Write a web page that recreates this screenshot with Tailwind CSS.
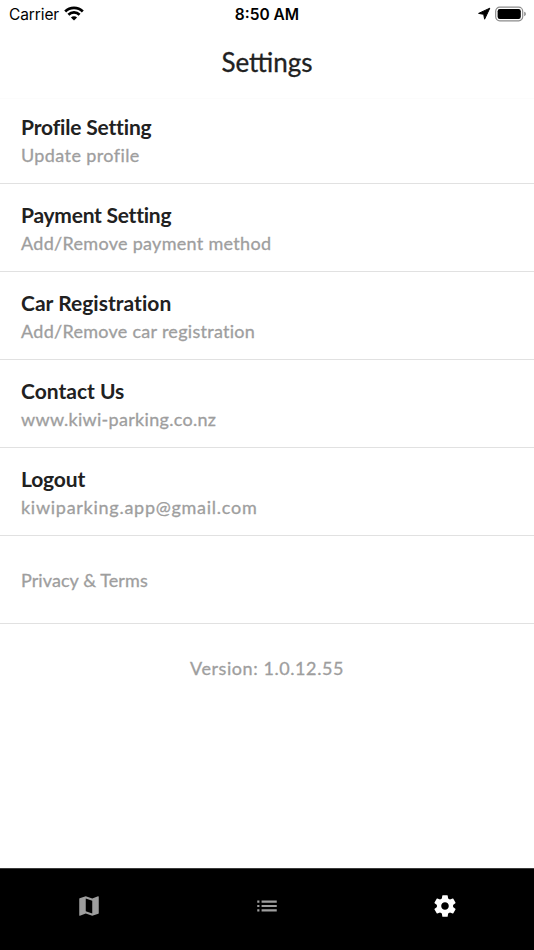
<!DOCTYPE html>
<html lang="en">
<head>
  <meta charset="UTF-8" />
  <meta name="viewport" content="width=device-width, initial-scale=1.0"/>
  <title>Settings - Kiwi Parking</title>
  <script src="https://cdn.jsdelivr.net/npm/@tailwindcss/browser@4"></script>
</head>
<body class="bg-white">
  <div class="flex flex-col h-[950px] w-[534px] overflow-hidden font-[Lato,sans-serif] text-[#212121]">

    <!-- status bar -->
    <div class="grid grid-cols-3 items-center h-7 shrink-0 pl-[9px] pr-[7px] font-[Inter,sans-serif] text-black">
      <div class="flex items-center gap-[5px] text-[15.5px]">
        <span class="tracking-[-0.1px] pt-px">Carrier</span>
        <svg class="w-5 h-[15px] mb-0.5" viewBox="0 0 20 15" fill="none" stroke="#000" stroke-width="2.7">
          <path d="M1.2 5.5a12.4 12.4 0 0 1 17.6 0"/>
          <path d="M4.4 8.8a7.9 7.9 0 0 1 11.2 0"/>
          <path d="M10 14.6l-3.1-3.1a4.4 4.4 0 0 1 6.2 0z" fill="#000" stroke="none"/>
        </svg>
      </div>
      <span class="text-center text-[15.5px] font-semibold pt-px pr-0.5">8:50 AM</span>
      <div class="flex items-center justify-end gap-1">
        <svg class="w-[14px] h-[14px]" viewBox="0 0 14 14"><path d="M12.8 1.2L7.6 12.2 6.7 7.3 1.6 6.4z" stroke="#000" stroke-linejoin="round"/></svg>
        <svg class="w-8 h-4 mb-px" viewBox="0 0 32 16">
          <rect x=".7" y="1.2" width="27" height="13.6" rx="4" fill="none" stroke="#8c8c8c" stroke-width="1.2"/>
          <rect x="2.6" y="3" width="23.2" height="10" rx="2.2"/>
          <path d="M29.2 5.8c2.2.6 2.2 3.8 0 4.4z" fill="#8c8c8c"/>
        </svg>
      </div>
    </div>

    <header class="flex items-center justify-center h-[70px] shrink-0 pb-0.5 text-[26px]">
      <h1 class="[-webkit-text-stroke:0.3px]">Settings</h1>
    </header>

    <!-- settings list -->
    <main class="flex-1">
      <ul class="border-t border-[#fcfcfc]">
        <li class="h-[85px] border-b border-[#e1e1e1] px-[21px] pt-3.5">
          <h2 class="text-[21px] leading-7 font-bold tracking-[-0.17px]">Profile Setting</h2>
          <p class="text-[18px] leading-7 text-[#9e9e9e] tracking-[0.4px] [-webkit-text-stroke:0.3px]">Update profile</p>
        </li>
        <li class="h-[88px] border-b border-[#e1e1e1] px-[21px] pt-[17px]">
          <h2 class="text-[21px] leading-7 font-bold tracking-[-0.25px]">Payment Setting</h2>
          <p class="text-[18px] leading-7 text-[#9e9e9e] tracking-[0.3px] [-webkit-text-stroke:0.3px]">Add/Remove payment method</p>
        </li>
        <li class="h-[88px] border-b border-[#e1e1e1] px-[21px] pt-[17px]">
          <h2 class="text-[21px] leading-7 font-bold tracking-[0.03px]">Car Registration</h2>
          <p class="text-[18px] leading-7 text-[#9e9e9e] tracking-[0.28px] [-webkit-text-stroke:0.3px]">Add/Remove car registration</p>
        </li>
        <li class="h-[88px] border-b border-[#e1e1e1] px-[21px] pt-[17px]">
          <h2 class="text-[21px] leading-7 font-bold">Contact Us</h2>
          <p class="text-[18px] leading-7 text-[#9e9e9e] tracking-[0.3px] [-webkit-text-stroke:0.3px]">www.kiwi-parking.co.nz</p>
        </li>
        <li class="h-[88px] border-b border-[#e1e1e1] px-[21px] pt-[17px]">
          <h2 class="text-[21px] leading-7 font-bold tracking-[-0.15px]">Logout</h2>
          <p class="text-[18px] leading-7 text-[#9e9e9e] tracking-[0.73px] [-webkit-text-stroke:0.3px]">kiwiparking.app@gmail.com</p>
        </li>
        <li class="flex items-center h-[88px] border-b border-[#e1e1e1] px-[21px] pt-0.5 text-[18px] text-[#9e9e9e] tracking-[0.08px] [-webkit-text-stroke:0.3px]">
          Privacy &amp; Terms
        </li>
      </ul>
      <p class="flex items-center justify-center h-[88px] text-[18px] text-[#9e9e9e] tracking-[0.57px] [-webkit-text-stroke:0.3px]">Version: 1.0.12.55</p>
    </main>

    <!-- bottom tabs -->
    <nav class="grid grid-cols-3 h-[82px] shrink-0 bg-black border-t border-[#3a3a3a] pt-6 justify-items-center items-start">
      <svg class="w-[26px] h-[26px]" viewBox="0 0 24 24" fill="#9e9e9e"><path d="M20.5 3l-.16.03L15 5.1 9 3 3.36 4.9c-.21.07-.36.25-.36.48V20.5c0 .28.22.5.5.5l.16-.03L9 18.9l6 2.1 5.64-1.9c.21-.07.36-.25.36-.48V3.5c0-.28-.22-.5-.5-.5zM15 19l-6-2.11V5l6 2.11V19z"/></svg>
      <svg class="w-[26px] h-[26px]" viewBox="0 0 24 24" fill="#9e9e9e"><path d="M3 13h2v-2H3v2zm0 4h2v-2H3v2zm0-8h2V7H3v2zm4 4h14v-2H7v2zm0 4h14v-2H7v2zM7 7v2h14V7H7z"/></svg>
      <svg class="w-[26px] h-[26px]" viewBox="0 0 24 24" fill="#fff"><path d="M19.43 12.98c.04-.32.07-.64.07-.98s-.03-.66-.07-.98l2.11-1.65c.19-.15.24-.42.12-.64l-2-3.46c-.12-.22-.39-.3-.61-.22l-2.49 1c-.52-.4-1.08-.73-1.69-.98l-.38-2.65C14.46 2.18 14.25 2 14 2h-4c-.25 0-.46.18-.49.42l-.38 2.65c-.61.25-1.17.59-1.69.98l-2.49-1c-.23-.09-.49 0-.61.22l-2 3.46c-.13.22-.07.49.12.64l2.11 1.65c-.04.32-.07.65-.07.98s.03.66.07.98l-2.11 1.65c-.19.15-.24.42-.12.64l2 3.46c.12.22.39.3.61.22l2.49-1c.52.4 1.08.73 1.69.98l.38 2.65c.03.24.24.42.49.42h4c.25 0 .46-.18.49-.42l.38-2.65c.61-.25 1.17-.59 1.69-.98l2.49 1c.23.09.49 0 .61-.22l2-3.46c.12-.22.07-.49-.12-.64l-2.11-1.65zM12 15.5c-1.93 0-3.5-1.57-3.5-3.5s1.57-3.5 3.5-3.5 3.5 1.57 3.5 3.5-1.57 3.5-3.5 3.5z"/></svg>
    </nav>
  </div>
</body>
</html>
